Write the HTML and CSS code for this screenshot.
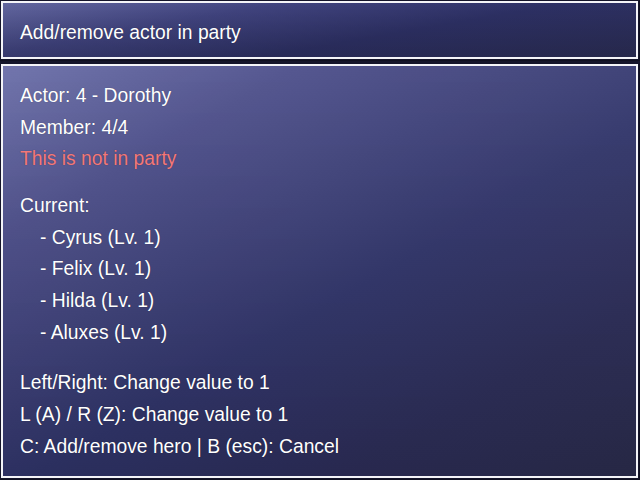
FILE: index.html
```html
<!DOCTYPE html>
<html>
<head>
<meta charset="utf-8">
<link rel="stylesheet" href="styles.css">
</head>
<body>
<div class="screen">
  <div class="window help">
    <div class="frame">
      <div class="line">Add/remove actor in party</div>
    </div>
  </div>
  <div class="window main">
    <div class="frame">
      <div class="line">Actor: 4 - Dorothy</div>
      <div class="line">Member: 4/4</div>
      <div class="line warn">This is not in party</div>
      <div class="line gap-a">Current:</div>
      <div class="line indent">- Cyrus (Lv. 1)</div>
      <div class="line indent">- Felix (Lv. 1)</div>
      <div class="line indent">- Hilda (Lv. 1)</div>
      <div class="line indent">- Aluxes (Lv. 1)</div>
      <div class="line gap-b">Left/Right: Change value to 1</div>
      <div class="line wide">L (A) / R (Z): Change value to 1</div>
      <div class="line wide">C: Add/remove hero | B (esc): Cancel</div>
    </div>
  </div>
</div>
</body>
</html>
```
FILE: styles.css
```css
html, body {
  margin: 0;
  padding: 0;
  background: #14142a;
}
.screen {
  width: 640px;
  height: 480px;
  display: flex;
  flex-direction: column;
  gap: 2px;
  background: #15152a;
  font-family: "Liberation Sans", Arial, sans-serif;
  font-size: 19.3px;
  color: #ffffff;
}
.window {
  box-sizing: border-box;
  padding: 1px;
  border-right: 1px solid #101020;
  border-bottom: 1px solid #101020;
}
.help {
  height: 64px;
}
.main {
  flex: 1;
}
.frame {
  box-sizing: border-box;
  height: 100%;
  border: 2px solid #f4f4f8;
  padding: 13px 17px;
  background:
    linear-gradient(to bottom, rgba(255,255,255,0.05), rgba(0,0,0,0.10)),
    linear-gradient(150deg, #6a6ea8 0%, #4c4e8a 22%, #30346a 55%, #2c2d58 78%, #2a2b4c 100%);
}
.help .frame {
  padding: 14px 17px 0;
  background:
    linear-gradient(to bottom, rgba(255,255,255,0.0) 0%, rgba(0,0,0,0.12) 100%),
    linear-gradient(170deg, #62669f 0%, #40437e 30%, #2d3064 60%, #2b2d55 100%);
}
.main .frame {
  padding-top: 14px;
}
.line {
  height: 31.7px;
  line-height: 31.7px;
  white-space: nowrap;
  text-shadow: 0 0 1px rgba(0,0,0,0.35);
}
.wide {
  height: 32px;
  line-height: 32px;
}
.warn {
  color: #f47878;
}
.indent {
  padding-left: 20px;
}
.gap-a {
  margin-top: 15px;
}
.gap-b {
  margin-top: 19px;
}
```
